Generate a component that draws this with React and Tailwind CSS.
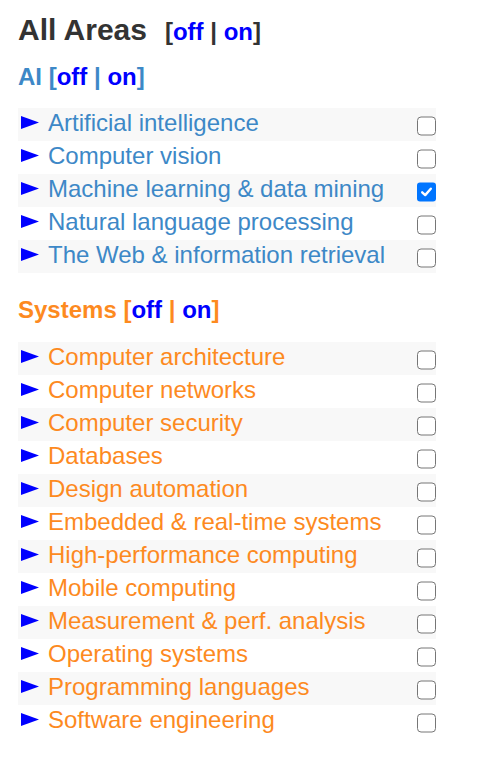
import React from 'react';

const aiAreas = [
  { name: 'Artificial intelligence' },
  { name: 'Computer vision' },
  { name: 'Machine learning & data mining', checked: true },
  { name: 'Natural language processing' },
  { name: 'The Web & information retrieval' },
];

const systemsAreas = [
  'Computer architecture',
  'Computer networks',
  'Computer security',
  'Databases',
  'Design automation',
  'Embedded & real-time systems',
  'High-performance computing',
  'Mobile computing',
  'Measurement & perf. analysis',
  'Operating systems',
  'Programming languages',
  'Software engineering',
].map((name) => ({ name }));

function Toggle({ bracket }) {
  return (
    <span className={bracket}>
      [<span className="text-[#0000ff]">off</span> | <span className="text-[#0000ff]">on</span>]
    </span>
  );
}

function Checkbox({ checked }) {
  if (checked) {
    return (
      <div className="w-[19px] h-[19px] rounded-[3px] bg-[#0075ff] flex items-center justify-center translate-y-[1.5px]">
        <svg width="13" height="13" viewBox="0 0 13 13">
          <path d="M2.2 6.8 L5.2 9.6 L10.8 3.2" fill="none" stroke="#fff" strokeWidth="2.4" strokeLinecap="round" strokeLinejoin="round" />
        </svg>
      </div>
    );
  }
  return <div className="w-[19px] h-[19px] rounded-[4px] border-[1.5px] border-[#767676] bg-white translate-y-[1.5px]" />;
}

function AreaRow({ area, index, color }) {
  return (
    <div className={`flex items-center justify-between h-[33px] pl-[3px] ${index % 2 === 0 ? 'bg-[#f8f8f8]' : 'bg-white'}`}>
      <div className="flex items-center gap-[9px] mb-[4px]">
        <svg width="18" height="13" viewBox="0 0 18 13">
          <polygon points="0,0 18,6.5 0,13" fill="#0000ff" />
        </svg>
        <span className={`text-[24px] leading-[28px] ${color}`}>{area.name}</span>
      </div>
      <Checkbox checked={area.checked} />
    </div>
  );
}

export default function App() {
  return (
    <div className="w-[478px] h-[758px] bg-white font-['Liberation_Sans',Arial,sans-serif] pl-[18px] pt-[15px]">
      <div className="text-[30px] leading-[29px] font-bold text-[#333]">
        All Areas<span className="ml-[18px] text-[24px]"><Toggle bracket="text-[#333]" /></span>
      </div>

      <div className="mt-[19px] text-[24px] leading-[24px] font-bold text-[#3d88c7]">
        AI <Toggle bracket="text-[#3d88c7]" />
      </div>

      <div className="mt-[19px] w-[418px]">
        {aiAreas.map((a, i) => (
          <AreaRow key={a.name} area={a} index={i} color="text-[#3d88c7]" />
        ))}
      </div>

      <div className="mt-[25px] text-[24px] leading-[24px] font-bold text-[#fd8a1f]">
        Systems <Toggle bracket="text-[#fd8a1f]" />
      </div>

      <div className="mt-[20px] w-[418px]">
        {systemsAreas.map((a, i) => (
          <AreaRow key={a.name} area={a} index={i} color="text-[#fd8a1f]" />
        ))}
      </div>
    </div>
  );
}
